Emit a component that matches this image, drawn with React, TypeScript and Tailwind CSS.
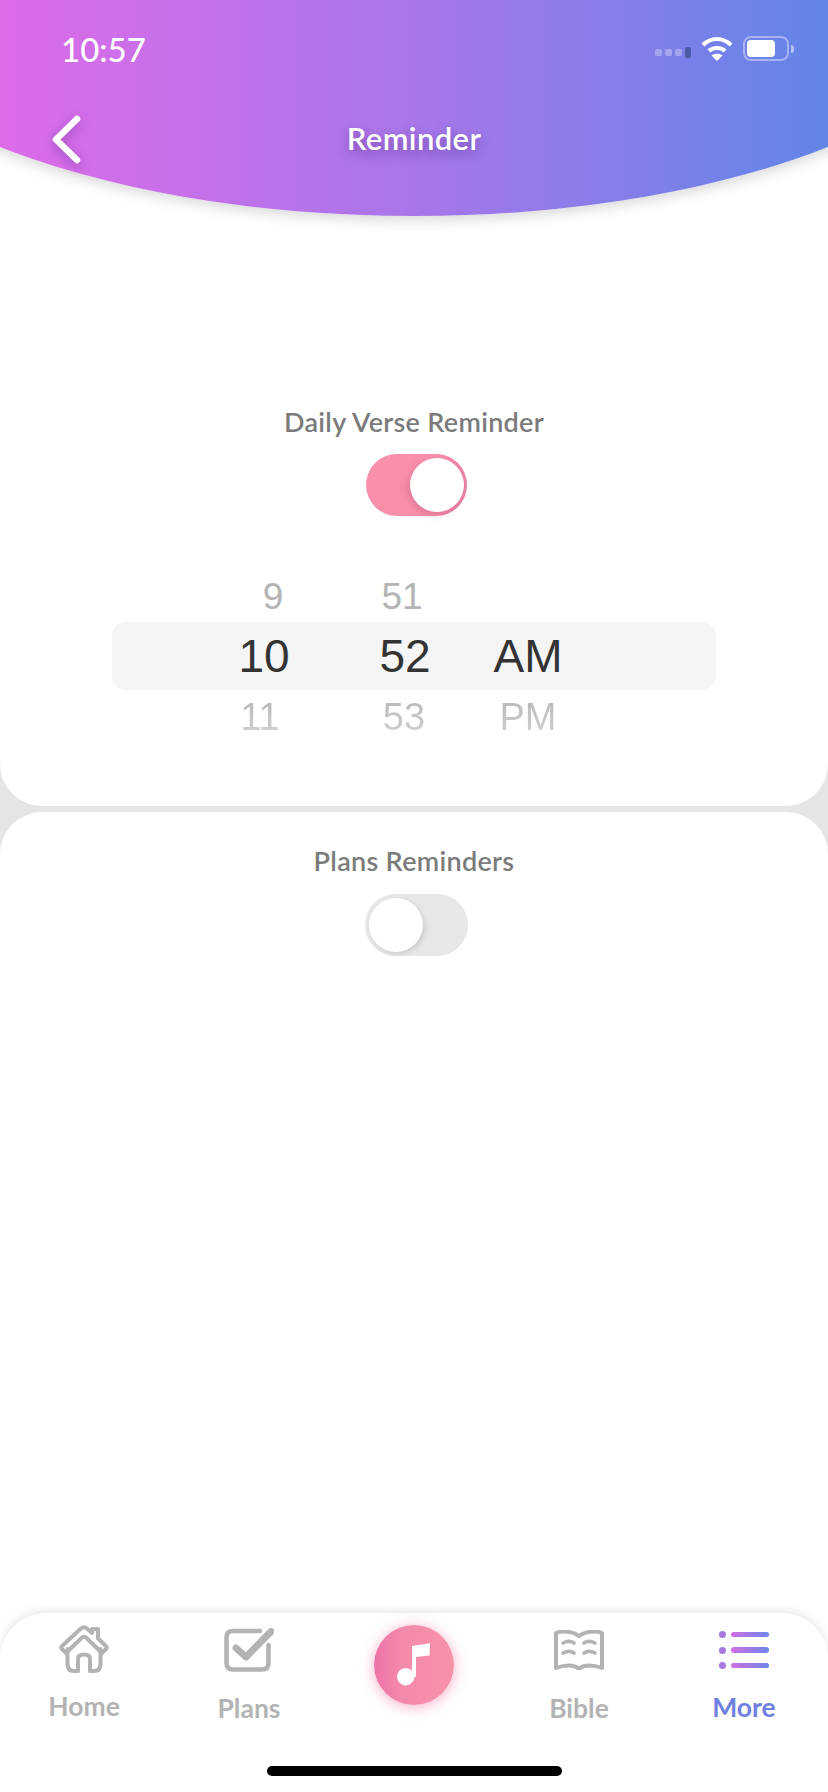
const ui = '"Lato", "Noto Sans", sans-serif';

function Toggle({ on }: { on: boolean }) {
  return on ? (
    <div className="ml-[5px] flex h-[62px] w-[101px] items-center justify-end rounded-full bg-[linear-gradient(100deg,#f88fab_60%,#e87fa8_100%)] pr-[3px]">
      <div className="h-[54px] w-[54px] rounded-full bg-white shadow-[-3px_3px_6px_rgba(190,90,120,0.35)]" />
    </div>
  ) : (
    <div className="ml-[5px] flex h-[62px] w-[103px] items-center justify-start rounded-full bg-[#e7e7e7] pl-[4px]">
      <div className="h-[54px] w-[54px] rounded-full bg-white shadow-[2px_2px_5px_rgba(0,0,0,0.12)]" />
    </div>
  );
}

function HomeIcon() {
  return (
    <svg width="50" height="48" viewBox="0 0 50 48" fill="none" stroke="#b3b3b3" strokeWidth="4" strokeLinejoin="round" strokeLinecap="round">
      <path d="M7 28 L3 24 Q1.500 22.500 3 21 L22 3.500 Q25 1 28 3.500 L33 8 V4 H39 V13.500 L47 21 Q48.500 22.500 47 24 L43 28 L27 12.500 Q25 11 23 12.500 Z" />
      <path d="M8.500 24 V39 Q8.500 46 15 46 H19 V34 Q19 29.500 25 29.500 Q31 29.500 31 34 V46 H35 Q41.500 46 41.500 39 V24" />
    </svg>
  );
}

function PlansIcon() {
  return (
    <svg width="50" height="44" viewBox="0 0 50 44" fill="none" stroke="#b3b3b3" strokeLinecap="round" strokeLinejoin="round">
      <path d="M36 3 H9 Q2.500 3 2.500 9 V35 Q2.500 41.500 9 41.500 H38 Q44.500 41.500 44.500 35 V17" strokeWidth="4.500" />
      <path d="M12 20 L22 29 L47 3.500" strokeWidth="7" />
    </svg>
  );
}

function BibleIcon() {
  return (
    <svg width="50" height="40" viewBox="0 0 50 40" fill="none" stroke="#b3b3b3" strokeLinecap="round" strokeLinejoin="round">
      <path d="M25 6 C19 1 8 0.500 2 3 V38 C10 35 20 34 25 39 C30 34 40 35 48 38 V3 C42 0.500 31 1 25 6 Z" strokeWidth="4" />
      <path d="M9 13 C13 11 17 11 20 13 M9 23 C13 21 17 21 20 23 M30 13 C33 11 37 11 41 13 M30 23 C33 21 37 21 41 23" strokeWidth="3.600" />
    </svg>
  );
}

function MoreIcon() {
  return (
    <div className="flex w-[50px] flex-col gap-[8.5px]">
      {[0, 1, 2].map((i) => (
        <div key={i} className="flex items-center gap-[5px]">
          <div className="h-[7px] w-[7px] rounded-full bg-[#a878e0]" />
          <div className="h-[5.500px] flex-1 rounded-full bg-[linear-gradient(90deg,#d070e2,#6e85e8)]" />
        </div>
      ))}
    </div>
  );
}

function NavItem({ icon, label, active, iconH, ty }: { icon: React.ReactNode; label: string; active?: boolean; iconH: string; ty: string }) {
  return (
    <div className="flex flex-col items-center">
      <div className={`flex items-start justify-center ${iconH}`}>{icon}</div>
      <div className={`${ty} text-[26.500px] leading-[28px] font-bold ${active ? 'text-[#6f80e0]' : 'text-[#b3b3b3]'}`}>{label}</div>
    </div>
  );
}

export default function App() {
  return (
    <div className="relative flex h-[1792px] w-[828px] flex-col overflow-hidden bg-[#e5e5e5]" style={{ fontFamily: ui }}>
      <section className="relative flex h-[806px] shrink-0 flex-col items-center rounded-b-[42px] bg-white">
        <header className="relative h-[216px] w-full shrink-0">
          <div className="absolute top-[-284px] left-[-186px] h-[500px] w-[1200px] rounded-[50%] bg-[linear-gradient(90deg,#dd6be8_15.5%,#a876e9_50%,#6285e8_84.5%)] shadow-[0_4px_14px_rgba(0,0,0,0.16)]" />
          <div className="relative flex h-[108px] items-start justify-between pt-[31px] pr-[34px] pl-[61px]">
            <span className="text-[33px] leading-[36px] font-medium text-white">10:57</span>
            <div className="flex items-center pt-[5px]">
              <div className="mr-[10px] flex items-center gap-[3px] pt-[8px]">
                <div className="h-[7px] w-[7px] rounded-[2px] bg-white/30" />
                <div className="h-[7px] w-[7px] rounded-[2px] bg-white/30" />
                <div className="h-[7px] w-[7px] rounded-[2px] bg-white/30" />
                <div className="h-[11px] w-[6px] rounded-[2px] bg-[#4a5ca8]" />
              </div>
              <svg width="32" height="25" viewBox="0 0 32 25" fill="none" stroke="white" strokeWidth="4" strokeLinecap="butt">
                <path d="M2 9 C10 1 22 1 30 9" />
                <path d="M8 15 C12 11 20 11 24 15" />
                <path d="M16 25 L10.500 19.500 C13 17 19 17 21.500 19.500 Z" fill="white" stroke="none" />
              </svg>
              <div className="ml-[10px] flex h-[25px] w-[46px] items-center rounded-[8px] border-2 border-white/40 pl-[2px]">
                <div className="h-[17px] w-[28px] rounded-[4px] bg-white" />
              </div>
              <div className="ml-[2px] h-[8px] w-[3px] rounded-r-full bg-white/50" />
            </div>
          </div>
          <div className="relative flex h-[60px] items-center justify-center">
            <svg className="absolute top-[7px] left-[48px] drop-shadow-[0_4px_6px_rgba(70,30,120,0.4)]" width="36" height="50" viewBox="0 0 36 50" fill="none" stroke="white" strokeWidth="6.500" strokeLinecap="round" strokeLinejoin="round">
              <path d="M29 4 L8 24.500 L29 45" />
            </svg>
            <h1 className="text-[31px] leading-[34px] font-semibold tracking-[0.4px] text-white [text-shadow:0_5px_12px_rgba(60,30,110,0.45)]">Reminder</h1>
          </div>
        </header>
        <div className="mt-[190px] text-[27px] leading-[32px] font-semibold tracking-[0.3px] text-[#7b7b7b]">Daily Verse Reminder</div>
        <div className="mt-[16px]">
          <Toggle on />
        </div>
        <div className="relative mt-[50px] h-[204px] w-full">
          <div className="absolute top-[56px] left-[112px] h-[68px] w-[604px] rounded-[14px] bg-[#f5f5f5]" />
          <div className="relative grid h-full grid-cols-[128px_154px_92px] pl-[200px] text-center" style={{ fontFamily: '"Liberation Sans", Arial, sans-serif' }}>
            <div className="flex flex-col items-center">
              <span className="h-[56px] pt-[7px] pl-[18px] text-[37px] leading-[48px] text-[#b4b4b4]">9</span>
              <span className="h-[68px] text-[46px] leading-[68px] text-[#333333]">10</span>
              <span className="mt-[2px] mr-[8px] bg-[linear-gradient(#b4b4b4,#d6d6d6)] bg-clip-text text-[38px] leading-[50px] text-transparent">11</span>
            </div>
            <div className="flex flex-col items-center">
              <span className="h-[56px] pt-[7px] pr-[6px] text-[37px] leading-[48px] text-[#b4b4b4]">51</span>
              <span className="h-[68px] text-[46px] leading-[68px] text-[#333333]">52</span>
              <span className="mt-[2px] mr-[2px] bg-[linear-gradient(#b4b4b4,#d6d6d6)] bg-clip-text text-[38px] leading-[50px] text-transparent">53</span>
            </div>
            <div className="flex flex-col items-center">
              <span className="h-[56px]" />
              <span className="h-[68px] text-[46px] leading-[68px] text-[#333333]">AM</span>
              <span className="mt-[2px] bg-[linear-gradient(#b4b4b4,#d6d6d6)] bg-clip-text text-[38px] leading-[50px] text-transparent">PM</span>
            </div>
          </div>
        </div>
      </section>
      <section className="mt-[6px] flex flex-1 flex-col items-center rounded-t-[42px] bg-white">
        <div className="mt-[33px] text-[27px] leading-[32px] font-semibold tracking-[0.3px] text-[#7b7b7b]">Plans Reminders</div>
        <div className="mt-[17px]">
          <Toggle on={false} />
        </div>
        <nav className="relative mt-auto h-[179px] w-full rounded-t-[46px] bg-white pt-[12px] shadow-[0_-3px_10px_rgba(0,0,0,0.09)]">
          <div className="ml-[1.500px] grid w-[825px] grid-cols-5 items-start">
            <NavItem icon={<HomeIcon />} label="Home" iconH="h-[48px]" ty="mt-[19px]" />
            <NavItem icon={<PlansIcon />} label="Plans" iconH="h-[46px] pt-[3px]" ty="mt-[23px]" />
            <div className="flex justify-center">
              <div className="flex h-[80px] w-[80px] items-center justify-center rounded-full bg-[linear-gradient(90deg,#ee72a8,#f48aaa_35%,#f792ab)] shadow-[0_2px_14px_rgba(247,120,160,0.6)]">
                <svg width="38" height="46" viewBox="31 27 38 46" fill="white">
                  <circle cx="41.700" cy="61.700" r="8.700" />
                  <path d="M48 31 L66 28.300 L65.500 40.600 L52 42 V62 H48 Z" />
                </svg>
              </div>
            </div>
            <NavItem icon={<BibleIcon />} label="Bible" iconH="h-[46px] pt-[5px]" ty="mt-[23px]" />
            <NavItem icon={<MoreIcon />} label="More" active iconH="h-[46px] pt-[6px]" ty="mt-[22px]" />
          </div>
          <div className="absolute bottom-[16px] left-[267px] h-[10px] w-[295px] rounded-full bg-black" />
        </nav>
      </section>
    </div>
  );
}
